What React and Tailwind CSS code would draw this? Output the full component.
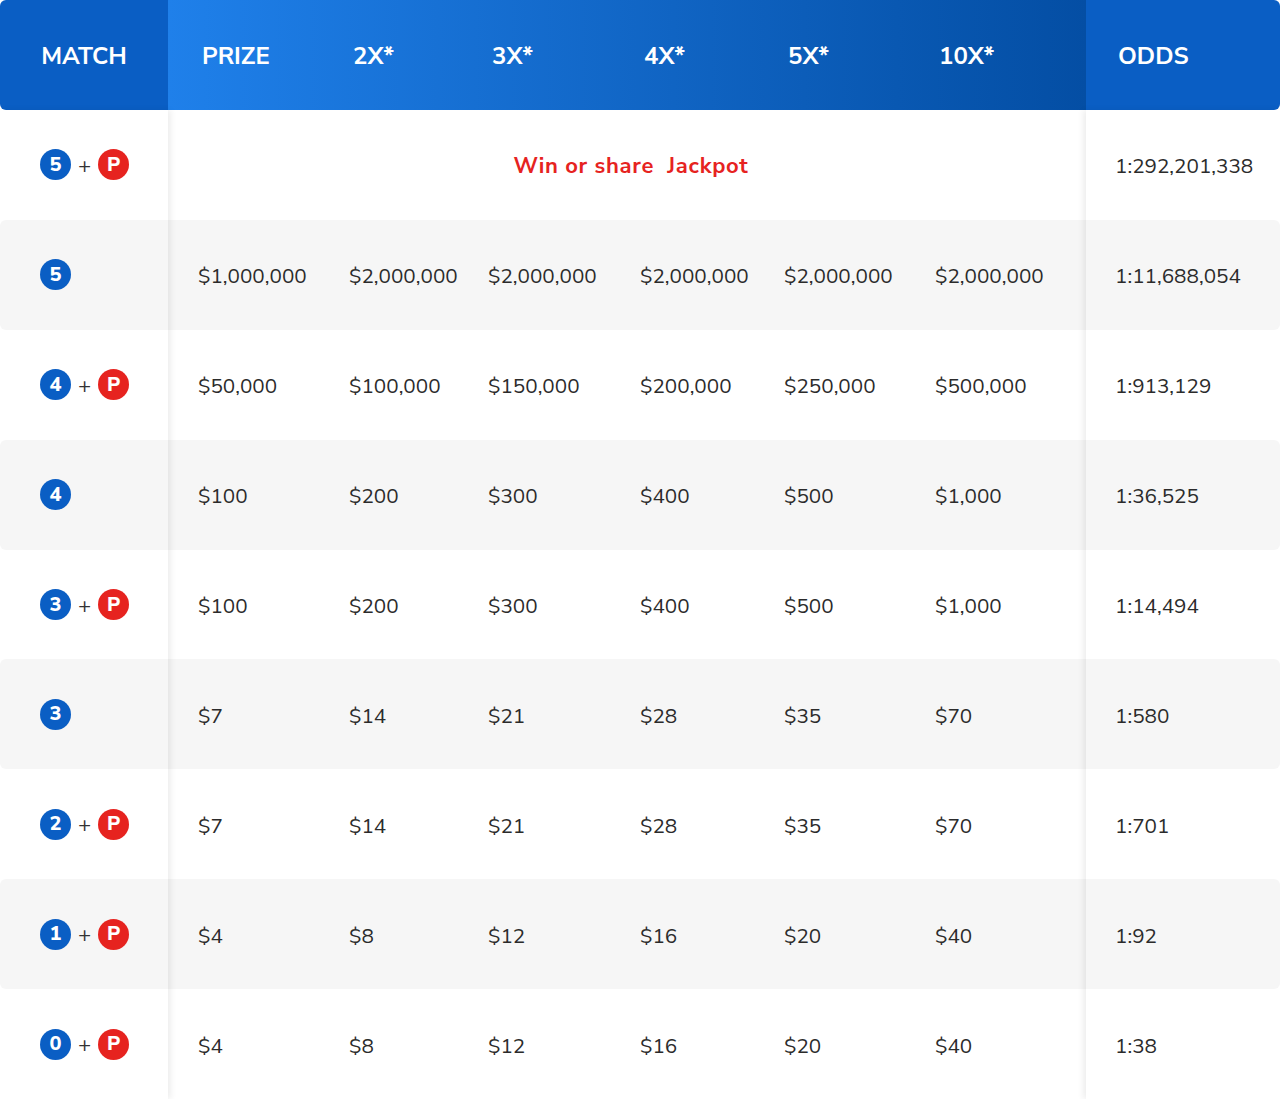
import React from 'react'

const MULTS = ['PRIZE', '2X*', '3X*', '4X*', '5X*', '10X*']
const COL_W = ['w-[151px]', 'w-[139px]', 'w-[152px]', 'w-[144px]', 'w-[151px]', 'flex-1']

const ROWS = [
  { n: 0, ball: 5, p: true, jackpot: true, odds: '1:292,201,338' },
  { n: 1, ball: 5, p: false, prizes: ['$1,000,000', '$2,000,000', '$2,000,000', '$2,000,000', '$2,000,000', '$2,000,000'], odds: '1:11,688,054' },
  { n: 2, ball: 4, p: true, prizes: ['$50,000', '$100,000', '$150,000', '$200,000', '$250,000', '$500,000'], odds: '1:913,129' },
  { n: 3, ball: 4, p: false, prizes: ['$100', '$200', '$300', '$400', '$500', '$1,000'], odds: '1:36,525' },
  { n: 4, ball: 3, p: true, prizes: ['$100', '$200', '$300', '$400', '$500', '$1,000'], odds: '1:14,494' },
  { n: 5, ball: 3, p: false, prizes: ['$7', '$14', '$21', '$28', '$35', '$70'], odds: '1:580' },
  { n: 6, ball: 2, p: true, prizes: ['$7', '$14', '$21', '$28', '$35', '$70'], odds: '1:701' },
  { n: 7, ball: 1, p: true, prizes: ['$4', '$8', '$12', '$16', '$20', '$40'], odds: '1:92' },
  { n: 8, ball: 0, p: true, prizes: ['$4', '$8', '$12', '$16', '$20', '$40'], odds: '1:38' },
]

function Ball({ children, red }) {
  return (
    <span className={`w-[31px] h-[31px] rounded-full flex items-center justify-center text-white font-extrabold text-[20px] leading-none ${red ? 'bg-[#e6231f]' : 'bg-[#0a5ec4]'}`}>
      {children}
    </span>
  )
}

export default function App() {
  const font = { fontFamily: '"Nunito Sans", Lato, "Open Sans", sans-serif' }
  return (
    <div className="w-[1280px] bg-white text-[#2b2b2b]" style={font}>

      {/* Header */}
      <div className="flex h-[110px] text-white font-bold text-[24px] uppercase">
        <div className="w-[168px] flex items-center justify-center pt-[2px] bg-[#0a5ec4] rounded-l-md">MATCH</div>
        <div className="flex-1 flex items-center pl-[34px] pt-[2px] bg-linear-to-r from-[#1f80ea] to-[#044ea4]">
          {MULTS.map((m, i) => (
            <div key={m} className={COL_W[i]}>{m}</div>
          ))}
        </div>
        <div className="w-[194px] flex items-center pl-[32px] pt-[2px] bg-[#0a5ec4] rounded-r-md">ODDS</div>
      </div>

      {/* Body */}
      <div className="flex">
        {/* Match column */}
        <div className="w-[168px] relative z-10 shadow-[3px_0_6px_rgba(0,0,0,0.07)]">
          {ROWS.map(r => (
            <div key={r.n} className={`h-[109.9px] flex items-center pl-10 gap-[7px] rounded-l-md ${r.n % 2 ? 'bg-[#f6f6f6]' : 'bg-white'}`}>
              <Ball>{r.ball}</Ball>
              {r.p && <span className="text-[22px] text-[#333] leading-none pt-[2px]">+</span>}
              {r.p && <Ball red>P</Ball>}
            </div>
          ))}
        </div>

        {/* Prize columns */}
        <div className="flex-1">
          {ROWS.map(r => (
            <div key={r.n} className={`h-[109.9px] flex items-center text-[20.7px] ${r.n % 2 ? 'bg-[#f6f6f6]' : 'bg-white'}`}>
              {r.jackpot ? (
                <div className="flex-1 text-center text-[22px] font-bold text-[#e6231f] tracking-[0.7px] whitespace-pre pt-[4px] pl-[8px]">{'Win or share  Jackpot'}</div>
              ) : (
                <div className="flex-1 flex pl-[30px] pt-[4px]">
                  {r.prizes.map((p, i) => (
                    <div key={i} className={COL_W[i]}>{p}</div>
                  ))}
                </div>
              )}
            </div>
          ))}
        </div>

        {/* Odds column */}
        <div className="w-[194px] relative z-10 shadow-[-3px_0_6px_rgba(0,0,0,0.07)]">
          {ROWS.map(r => (
            <div key={r.n} className={`h-[109.9px] flex items-center pl-[29px] pt-[4px] text-[20.7px] rounded-r-md ${r.n % 2 ? 'bg-[#f6f6f6]' : 'bg-white'}`}>
              {r.odds}
            </div>
          ))}
        </div>
      </div>
    </div>
  )
}
